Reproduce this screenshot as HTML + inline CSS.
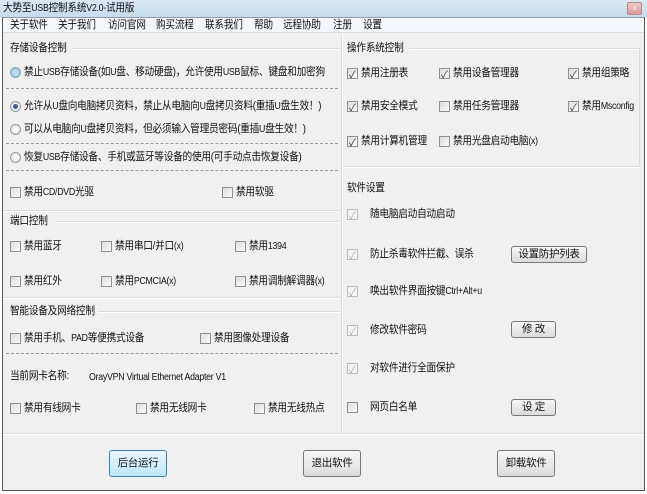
<!DOCTYPE html>
<html><head><meta charset="utf-8"><style>
*{margin:0;padding:0;box-sizing:border-box}
body{width:647px;height:494px;background:#fff;font-family:"Liberation Sans","Noto Sans CJK SC",sans-serif;font-size:11px;letter-spacing:-0.3px;color:#111;position:relative;overflow:hidden}
.a{position:absolute;white-space:nowrap;line-height:13px;transform:scaleX(0.88);transform-origin:0 0}
.s{font-size:10px;letter-spacing:-0.3px}
#title{position:absolute;left:0;top:0;width:647px;height:17px;background:linear-gradient(#dbe8f5,#c7dbef)}
#win{position:absolute;left:2px;top:17px;width:643px;height:474px;border:1px solid #555;border-top:none;background:#f0f0f0}
#menu{position:absolute;left:3px;top:17px;width:641px;height:16px;background:#f3f6fb;border-top:1px solid #999;border-bottom:1px solid #ddd}
.cb{position:absolute;width:11px;height:11px;border:1px solid #8f8f8f;background:linear-gradient(135deg,#ddd,#fafafa)}
.cb.on::after{content:"✓";position:absolute;left:1px;top:-3px;font-size:10px;color:#234}
.cb.dis{border-color:#bbb;background:#f4f4f4}
.cb.dis::after{content:"✓";position:absolute;left:1px;top:-3px;font-size:10px;color:#aaa}
.rb{position:absolute;width:11px;height:11px;border-radius:50%;border:1px solid #999;background:radial-gradient(#fff,#ddd)}
.rb.b{background:radial-gradient(#cfe6f7,#8fb8db);border-color:#7aa}
.rb.on::after{content:"";position:absolute;left:2px;top:2px;width:5px;height:5px;border-radius:50%;background:#3a5f8a}
.dash{position:absolute;left:6px;width:332px;border-top:1px dashed #999}
.gl{position:absolute;border-top:1px solid #dcdcdc;border-bottom:1px solid #fff}
.btn{position:absolute;border:1px solid #777;border-radius:3px;background:linear-gradient(#f6f6f6,#dcdcdc);text-align:center;font-size:10.5px}
</style></head><body>
<div id="title"></div>
<div class="a" style="left:3px;top:2px">大势至<span class="s">USB</span>控制系统<span class="s">V2.0-</span>试用版</div>
<div style="position:absolute;left:627px;top:2px;width:15px;height:13px;border:1px solid #b88;border-radius:2px;background:linear-gradient(#eecaca,#d99);color:#fff;font-size:8px;text-align:center;line-height:11px">×</div>
<div id="win"></div>
<div id="menu"></div>
<div class="a" style="left:10px;top:19px">关于软件</div>
<div class="a" style="left:58px;top:19px">关于我们</div>
<div class="a" style="left:108px;top:19px">访问官网</div>
<div class="a" style="left:156px;top:19px">购买流程</div>
<div class="a" style="left:205px;top:19px">联系我们</div>
<div class="a" style="left:254px;top:19px">帮助</div>
<div class="a" style="left:283px;top:19px">远程协助</div>
<div class="a" style="left:333px;top:19px">注册</div>
<div class="a" style="left:363px;top:19px">设置</div>

<div style="position:absolute;left:341px;top:34px;height:399px;border-left:1px solid #dcdcdc;border-right:1px solid #fff"></div>
<div class="gl" style="left:3px;top:433px;width:641px"></div>

<div class="a" style="left:10px;top:42px">存储设备控制</div>
<div class="gl" style="left:72px;top:48px;width:268px"></div>
<div class="rb b" style="left:10px;top:67px"></div><div class="a" style="left:24px;top:66px">禁止<span class="s">USB</span>存储设备(如<span class="s">U</span>盘、移动硬盘)，允许使用<span class="s">USB</span>鼠标、键盘和加密狗</div>
<div class="dash" style="top:88px"></div>
<div class="rb on" style="left:10px;top:101px"></div><div class="a" style="left:24px;top:100px">允许从<span class="s">U</span>盘向电脑拷贝资料，禁止从电脑向<span class="s">U</span>盘拷贝资料(重插<span class="s">U</span>盘生效！)</div>
<div class="rb" style="left:10px;top:124px"></div><div class="a" style="left:24px;top:123px">可以从电脑向<span class="s">U</span>盘拷贝资料，但必须输入管理员密码(重插<span class="s">U</span>盘生效！)</div>
<div class="dash" style="top:143px"></div>
<div class="rb" style="left:10px;top:152px"></div><div class="a" style="left:24px;top:151px">恢复<span class="s">USB</span>存储设备、手机或蓝牙等设备的使用(可手动点击恢复设备)</div>
<div class="dash" style="top:170px"></div>
<div class="cb" style="left:10px;top:187px"></div><div class="a" style="left:24px;top:186px">禁用<span class="s">CD/DVD</span>光驱</div>
<div class="cb" style="left:222px;top:187px"></div><div class="a" style="left:236px;top:186px">禁用软驱</div>
<div class="gl" style="left:3px;top:210px;width:337px"></div>
<div class="a" style="left:10px;top:215px">端口控制</div>
<div class="gl" style="left:56px;top:221px;width:284px"></div>
<div class="cb" style="left:10px;top:241px"></div><div class="a" style="left:24px;top:240px">禁用蓝牙</div>
<div class="cb" style="left:101px;top:241px"></div><div class="a" style="left:115px;top:240px">禁用串口/并口<span class="s">(x)</span></div>
<div class="cb" style="left:235px;top:241px"></div><div class="a" style="left:249px;top:240px">禁用<span class="s">1394</span></div>
<div class="cb" style="left:10px;top:276px"></div><div class="a" style="left:24px;top:275px">禁用红外</div>
<div class="cb" style="left:101px;top:276px"></div><div class="a" style="left:115px;top:275px">禁用<span class="s">PCMCIA(x)</span></div>
<div class="cb" style="left:235px;top:276px"></div><div class="a" style="left:249px;top:275px">禁用调制解调器<span class="s">(x)</span></div>
<div class="gl" style="left:3px;top:297px;width:337px"></div>
<div class="a" style="left:10px;top:305px">智能设备及网络控制</div>
<div class="gl" style="left:98px;top:311px;width:242px"></div>
<div class="cb" style="left:10px;top:333px"></div><div class="a" style="left:24px;top:332px">禁用手机、<span class="s">PAD</span>等便携式设备</div>
<div class="cb" style="left:200px;top:333px"></div><div class="a" style="left:214px;top:332px">禁用图像处理设备</div>
<div class="dash" style="top:353px"></div>
<div class="a" style="left:10px;top:370px">当前网卡名称:</div>
<div class="a s" style="left:89px;top:371px">OrayVPN Virtual Ethernet Adapter V1</div>
<div class="cb" style="left:10px;top:403px"></div><div class="a" style="left:24px;top:402px">禁用有线网卡</div>
<div class="cb" style="left:136px;top:403px"></div><div class="a" style="left:150px;top:402px">禁用无线网卡</div>
<div class="cb" style="left:254px;top:403px"></div><div class="a" style="left:268px;top:402px">禁用无线热点</div>

<div class="a" style="left:347px;top:42px">操作系统控制</div>
<div class="gl" style="left:409px;top:48px;width:232px"></div>
<div style="position:absolute;left:639px;top:48px;height:118px;border-left:1px solid #dcdcdc"></div>
<div class="cb on" style="left:347px;top:68px"></div><div class="a" style="left:361px;top:67px">禁用注册表</div>
<div class="cb on" style="left:439px;top:68px"></div><div class="a" style="left:453px;top:67px">禁用设备管理器</div>
<div class="cb on" style="left:568px;top:68px"></div><div class="a" style="left:582px;top:67px">禁用组策略</div>
<div class="cb on" style="left:347px;top:101px"></div><div class="a" style="left:361px;top:100px">禁用安全模式</div>
<div class="cb" style="left:439px;top:101px"></div><div class="a" style="left:453px;top:100px">禁用任务管理器</div>
<div class="cb on" style="left:568px;top:101px"></div><div class="a" style="left:582px;top:100px">禁用<span class="s">Msconfig</span></div>
<div class="cb on" style="left:347px;top:136px"></div><div class="a" style="left:361px;top:135px">禁用计算机管理</div>
<div class="cb" style="left:439px;top:136px"></div><div class="a" style="left:453px;top:135px">禁用光盘启动电脑<span class="s">(x)</span></div>
<div class="gl" style="left:343px;top:166px;width:297px"></div>
<div class="a" style="left:347px;top:182px">软件设置</div>
<div class="cb dis" style="left:347px;top:209px"></div><div class="a" style="left:370px;top:208px">随电脑启动自动启动</div>
<div class="cb dis" style="left:347px;top:249px"></div><div class="a" style="left:370px;top:248px">防止杀毒软件拦截、误杀</div>
<div class="btn" style="left:511px;top:246px;width:76px;height:17px;line-height:15px">设置防护列表</div>
<div class="cb dis" style="left:347px;top:286px"></div><div class="a" style="left:370px;top:285px">唤出软件界面按键<span class="s">Ctrl+Alt+u</span></div>
<div class="cb dis" style="left:347px;top:325px"></div><div class="a" style="left:370px;top:324px">修改软件密码</div>
<div class="btn" style="left:511px;top:321px;width:45px;height:17px;line-height:15px">修 改</div>
<div class="cb dis" style="left:347px;top:363px"></div><div class="a" style="left:370px;top:362px">对软件进行全面保护</div>
<div class="cb" style="left:347px;top:402px"></div><div class="a" style="left:370px;top:401px">网页白名单</div>
<div class="btn" style="left:511px;top:399px;width:45px;height:17px;line-height:15px">设 定</div>

<div class="btn" style="left:109px;top:450px;width:58px;height:27px;line-height:25px;border-color:#3c7fb1;background:linear-gradient(#eaf6fd,#bee6fd)">后台运行</div>
<div class="btn" style="left:303px;top:450px;width:58px;height:27px;line-height:25px">退出软件</div>
<div class="btn" style="left:497px;top:450px;width:58px;height:27px;line-height:25px">卸载软件</div>
</body></html>
